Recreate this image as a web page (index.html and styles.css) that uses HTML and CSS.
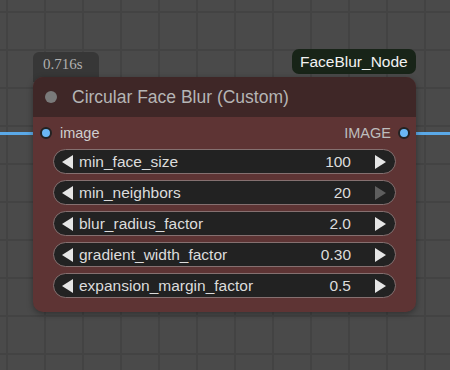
FILE: index.html
```html
<!DOCTYPE html>
<html lang="en">

<head>
    <meta charset="UTF-8">
    <meta name="viewport" content="width=device-width, initial-scale=1.0">
    <title>Circular Face Blur</title>
    <link rel="stylesheet" href="styles.css">
</head>

<body>
    <div id="canvas">
        <div class="link link-in"></div>
        <div class="link link-out"></div>

        <div class="badge-time">0.716s</div>
        <div class="badge-id">FaceBlur_Node</div>

        <div class="node">
            <div class="node-title">
                <span class="title-dot"></span>
                <span class="title-text">Circular Face Blur (Custom)</span>
            </div>
            <div class="node-body">
                <div class="slots">
                    <div class="slot slot-in"><span class="slot-dot"></span>image</div>
                    <div class="slot slot-out">IMAGE<span class="slot-dot"></span></div>
                </div>
                <div class="widgets">
                    <div class="widget">
                        <span class="arrow arrow-left"></span>
                        <span class="w-name">min_face_size</span>
                        <span class="w-value">100</span>
                        <span class="arrow arrow-right"></span>
                    </div>
                    <div class="widget">
                        <span class="arrow arrow-left"></span>
                        <span class="w-name">min_neighbors</span>
                        <span class="w-value">20</span>
                        <span class="arrow arrow-right disabled"></span>
                    </div>
                    <div class="widget">
                        <span class="arrow arrow-left"></span>
                        <span class="w-name">blur_radius_factor</span>
                        <span class="w-value">2.0</span>
                        <span class="arrow arrow-right"></span>
                    </div>
                    <div class="widget">
                        <span class="arrow arrow-left"></span>
                        <span class="w-name">gradient_width_factor</span>
                        <span class="w-value">0.30</span>
                        <span class="arrow arrow-right"></span>
                    </div>
                    <div class="widget">
                        <span class="arrow arrow-left"></span>
                        <span class="w-name">expansion_margin_factor</span>
                        <span class="w-value">0.5</span>
                        <span class="arrow arrow-right"></span>
                    </div>
                </div>
            </div>
        </div>
    </div>
</body>

</html>
```

FILE: styles.css
```css
body {
    margin: 0;
    font-family: "Liberation Sans", Arial, sans-serif;
}

#canvas {
    position: relative;
    width: 450px;
    height: 370px;
    overflow: hidden;
    background-color: #4a4a4a;
    background-image:
        linear-gradient(to right, #434343 2px, transparent 2px),
        linear-gradient(to bottom, #434343 2px, transparent 2px);
    background-size: 38px 38px;
    background-position: 6px 11px;
}

/* links going out of the canvas */
.link {
    position: absolute;
    top: 132px;
    height: 3px;
    background: #5aa9e8;
}

.link-in {
    left: 0;
    width: 44px;
}

.link-out {
    left: 405px;
    width: 45px;
}

.badge-time {
    position: absolute;
    left: 33px;
    top: 52px;
    width: 66px;
    height: 30px;
    box-sizing: border-box;
    padding: 4px 0 0 10px;
    background: #373737;
    border-radius: 6px 6px 0 0;
    color: #b0b0b0;
    font-family: "Liberation Serif", "Times New Roman", serif;
    font-size: 15px;
}

.badge-id {
    position: absolute;
    left: 292px;
    top: 49px;
    height: 25px;
    padding: 0 8px;
    display: flex;
    align-items: center;
    background: #182418;
    border-radius: 7px;
    color: #f2f2f2;
    font-size: 15.5px;
}

.node {
    position: absolute;
    left: 33px;
    top: 77px;
    width: 383px;
    border-radius: 10px;
    overflow: hidden;
    background: #5e3434;
    box-shadow: 0 2px 6px rgba(0, 0, 0, 0.35);
}

.node-title {
    height: 40px;
    display: flex;
    align-items: center;
    padding-left: 12px;
    gap: 15px;
    background: #3f2727;
}

.title-dot {
    width: 12px;
    height: 12px;
    border-radius: 50%;
    background: #7a7a7a;
}

.title-text {
    color: #b5b5b5;
    font-size: 17.5px;
}

.node-body {
    padding-bottom: 14px;
}

.slots {
    height: 32px;
    display: flex;
    justify-content: space-between;
    align-items: center;
    color: #cfcfcf;
    font-size: 14.5px;
}

.slot {
    display: flex;
    align-items: center;
}

.slot-in {
    gap: 8px;
    padding-left: 7px;
}

.slot-out {
    gap: 7px;
    padding-right: 6px;
    color: #bdbdbd;
}

.slot-dot {
    width: 8px;
    height: 8px;
    border-radius: 50%;
    background: #6ab8f6;
    border: 2px solid #222;
}

.widgets {
    display: flex;
    flex-direction: column;
    gap: 6px;
    margin: 0 20px;
}

.widget {
    height: 25px;
    box-sizing: border-box;
    display: flex;
    align-items: center;
    padding: 0 9px 0 8px;
    background: #222222;
    border: 1px solid #857070;
    border-radius: 13px;
    color: #dcdcdc;
    font-size: 15.5px;
}

.w-name {
    flex: 1;
    margin-left: 6px;
}

.w-value {
    margin-right: 24px;
}

.arrow {
    width: 0;
    height: 0;
    border-top: 7px solid transparent;
    border-bottom: 7px solid transparent;
}

.arrow-left {
    border-right: 11px solid #e6e6e6;
}

.arrow-right {
    border-left: 11px solid #e6e6e6;
}

.arrow-right.disabled {
    border-left-color: #5e5e5e;
}
```
